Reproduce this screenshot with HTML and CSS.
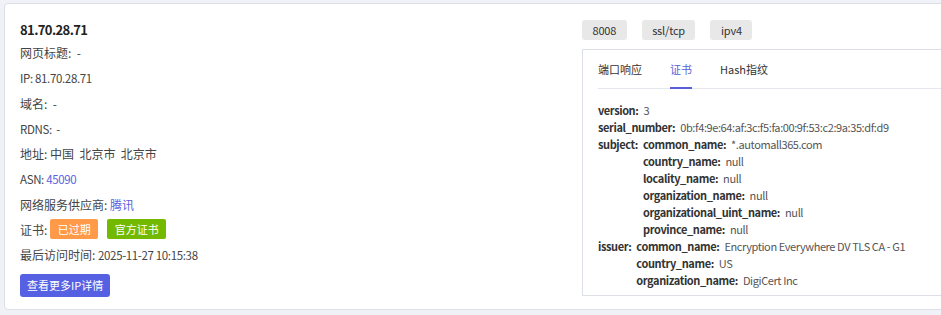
FILE: index.html
```html
<!DOCTYPE html>
<html lang="zh-CN">
<head>
<meta charset="utf-8">
<title>81.70.28.71</title>
<link rel="stylesheet" href="styles.css">
</head>
<body>
<div class="card">
  <div class="info">
    <div class="title">81.70.28.71</div>
    <div class="row">网页标题:&nbsp; -</div>
    <div class="row"><span class="lat">IP: 81.70.28.71</span></div>
    <div class="row">域名:&nbsp; -</div>
    <div class="row"><span class="lat">RDNS:&nbsp; -</span></div>
    <div class="row">地址: 中国&nbsp; 北京市&nbsp; 北京市</div>
    <div class="row"><span class="lat">ASN: <a class="link">45090</a></span></div>
    <div class="row">网络服务供应商: <a class="link">腾讯</a></div>
    <div class="row cert-row">证书: <span class="badge badge-orange">已过期</span><span class="badge badge-green">官方证书</span></div>
    <div class="row">最后访问时间: <span class="lat">2025-11-27 10:15:38</span></div>
    <button class="btn">查看更多IP详情</button>
  </div>
  <div class="detail">
    <div class="tags">
      <span class="tag">8008</span>
      <span class="tag">ssl/tcp</span>
      <span class="tag">ipv4</span>
    </div>
    <div class="panel">
      <div class="tabs">
        <span class="tab">端口响应</span>
        <span class="tab active">证书</span>
        <span class="tab">Hash指纹</span>
      </div>
      <div class="kv">
        <div class="line"><span class="k">version:</span><span class="v">3</span></div>
        <div class="line"><span class="k">serial_number:</span><span class="v">0b:f4:9e:64:af:3c:f5:fa:00:9f:53:c2:9a:35:df:d9</span></div>
        <div class="group">
          <span class="k">subject:</span>
          <div class="nested">
            <div class="line"><span class="k">common_name:</span><span class="v">*.automall365.com</span></div>
            <div class="line"><span class="k">country_name:</span><span class="v">null</span></div>
            <div class="line"><span class="k">locality_name:</span><span class="v">null</span></div>
            <div class="line"><span class="k">organization_name:</span><span class="v">null</span></div>
            <div class="line"><span class="k">organizational_uint_name:</span><span class="v">null</span></div>
            <div class="line"><span class="k">province_name:</span><span class="v">null</span></div>
          </div>
        </div>
        <div class="group">
          <span class="k">issuer:</span>
          <div class="nested">
            <div class="line"><span class="k">common_name:</span><span class="v">Encryption Everywhere DV TLS CA - G1</span></div>
            <div class="line"><span class="k">country_name:</span><span class="v">US</span></div>
            <div class="line"><span class="k">organization_name:</span><span class="v">DigiCert Inc</span></div>
          </div>
        </div>
      </div>
    </div>
  </div>
</div>
</body>
</html>
```
FILE: styles.css
```css
html, body {
  margin: 0;
  padding: 0;
  overflow: hidden;
  background: #f0f2f7;
}
body {
  font-family: "Noto Sans CJK SC", "Noto Sans", sans-serif;
  font-size: 12px;
  color: #444;
  width: 941px;
  height: 315px;
}
.card {
  margin: 3px 0 0 4px;
  width: 1200px;
  height: 307px;
  box-sizing: border-box;
  background: #fff;
  border: 1px solid #dcdfe6;
  border-radius: 4px;
  padding: 16px 0 0 15px;
  display: flex;
}
.info {
  width: 562px;
  flex: none;
}
.title {
  font-size: 13px;
  letter-spacing: -0.6px;
  font-weight: bold;
  color: #222;
  height: 20px;
  line-height: 20px;
}
.row {
  height: 25.25px;
  line-height: 25.25px;
  white-space: nowrap;
}
.lat {
  font-size: 11.5px;
  letter-spacing: -0.35px;
}
.link {
  color: #5a62e0;
  text-decoration: none;
}
.cert-row {
  display: flex;
  align-items: center;
}
.badge {
  display: inline-block;
  height: 20px;
  line-height: 20px;
  padding: 0 7.5px;
  font-size: 11px;
  color: #fff;
  border-radius: 2px;
}
.badge-orange {
  background: #ff9a48;
  margin-left: 3px;
}
.badge-green {
  background: #72b900;
  margin-left: 9px;
}
.btn {
  margin-top: 7px;
  height: 23px;
  padding: 0 7px;
  border: none;
  border-radius: 3px;
  background: #5660e2;
  color: #fff;
  font-family: inherit;
  font-size: 11px;
  line-height: 23px;
}
.detail {
  flex: none;
  width: 620px;
}
.tags {
  display: flex;
  gap: 15px;
  height: 20px;
}
.tag {
  height: 20px;
  line-height: 20px;
  padding: 0 10.5px;
  background: #e8e8e8;
  border-radius: 3px;
  font-size: 11px;
  letter-spacing: -0.2px;
  color: #333;
}
.panel {
  margin-top: 9px;
  height: 247px;
  box-sizing: border-box;
  border: 1px solid #dcdfe6;
  padding: 0 15px;
}
.tabs {
  display: flex;
  height: 38px;
  border-bottom: 1px solid #e4e7ed;
  font-size: 11px;
  color: #333;
}
.tab {
  line-height: 38px;
  margin-right: 28px;
  box-sizing: border-box;
}
.tab.active {
  color: #5a5fd8;
  border-bottom: 2px solid #5a5fd8;
  margin-bottom: -1px;
}
.kv {
  padding-top: 13px;
  font-size: 11px;
  letter-spacing: -0.4px;
}
.line {
  height: 17px;
  line-height: 17px;
  white-space: nowrap;
}
.group {
  display: flex;
}
.group > .k {
  line-height: 17px;
}
.k {
  font-weight: bold;
  color: #333;
  margin-right: 5px;
}
.v {
  color: #555;
}
```
